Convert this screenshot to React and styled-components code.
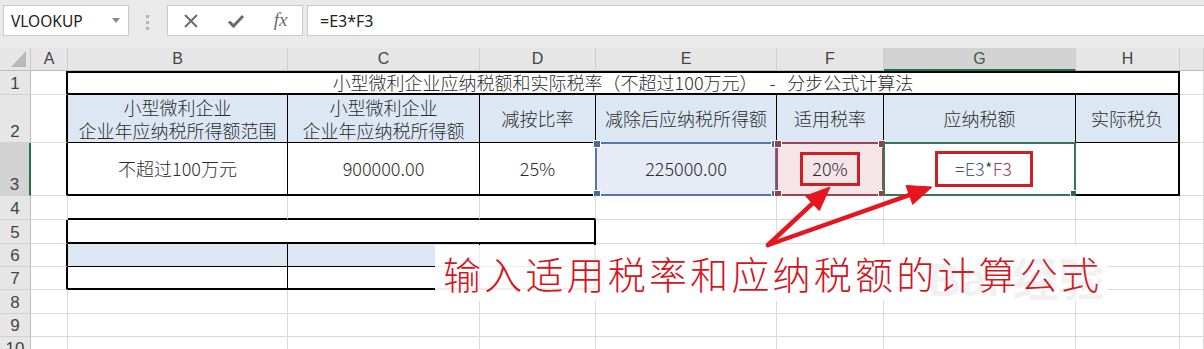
import React from 'react';
import styled, { createGlobalStyle } from 'styled-components';

const GlobalStyle = createGlobalStyle`
  html, body {
    margin: 0;
    padding: 0;
    background: #fff;
  }
  body {
    width: 1204px;
    height: 349px;
    overflow: hidden;
    font-family: "Noto Sans", "Noto Sans CJK SC", sans-serif;
  }
`;

const COLS = [31, 37, 220, 192, 116, 181, 107, 192, 104, 24];
const ROWS = [23, 24, 48, 53, 24, 24, 23, 23, 24, 23, 23];
const LETTERS = ['A', 'B', 'C', 'D', 'E', 'F', 'G', 'H', ''];

const Page = styled.div`
  position: relative;
  width: 1204px;
  height: 349px;
  overflow: hidden;
  background: #fff;
`;

/* ---------- formula bar ---------- */

const FormulaBar = styled.div`
  display: flex;
  align-items: flex-start;
  height: 48px;
  box-sizing: border-box;
  padding: 5px 0 0 3px;
  background: #eaeaea;
`;

const Box = styled.div`
  display: flex;
  align-items: center;
  height: 31px;
  box-sizing: border-box;
  background: #fff;
  border: 1px solid #c9c9c9;
`;

const NameBox = styled(Box)`
  width: 126px;
  justify-content: space-between;
  padding: 0 8px 0 7px;
  font-size: 15.5px;
  color: #222;
`;

const Dots = styled.div`
  display: flex;
  flex-direction: column;
  gap: 3px;
  margin: 10px 18px 0 17px;
  span {
    width: 3px;
    height: 3px;
    background: #b4b4b4;
  }
`;

const FxBox = styled(Box)`
  width: 136px;
  display: grid;
  grid-template-columns: repeat(3, 45px);
  justify-items: center;
`;

const Fx = styled.span`
  font-family: "Liberation Serif", serif;
  font-style: italic;
  font-size: 19px;
  color: #6a6a6a;
  margin-top: -2px;
`;

const FormulaInput = styled(Box)`
  flex: 1;
  margin-left: 4px;
  padding-left: 12px;
  font-size: 16px;
  color: #222;
  border-right: none;
`;

/* ---------- sheet ---------- */

const Sheet = styled.div`
  display: grid;
  grid-template-columns: ${COLS.map((c) => c + 'px').join(' ')};
  grid-template-rows: ${ROWS.map((r) => r + 'px').join(' ')};
`;

const Corner = styled.div`
  display: flex;
  align-items: flex-end;
  justify-content: flex-end;
  padding: 0 4px 3px 0;
  box-sizing: border-box;
  background: #e6e6e6;
  border-right: 1px solid #c6c6c6;
  border-bottom: 1px solid #bdbdbd;
`;

const ColHead = styled.div`
  display: flex;
  align-items: center;
  justify-content: center;
  box-sizing: border-box;
  background: ${(p) => (p.$active ? '#d3d3d3' : '#e6e6e6')};
  border-right: 1px solid #cfcfcf;
  border-bottom: ${(p) => (p.$active ? '2px solid #217346' : '1px solid #bdbdbd')};
  font-family: "Liberation Sans", sans-serif;
  font-size: 16px;
  color: ${(p) => (p.$active ? '#3d5c4a' : '#444')};
`;

const RowHead = styled.div`
  display: flex;
  align-items: flex-end;
  justify-content: center;
  box-sizing: border-box;
  background: ${(p) => (p.$active ? '#d3d3d3' : '#e6e6e6')};
  border-right: ${(p) => (p.$active ? '2px solid #217346' : '1px solid #bdbdbd')};
  border-bottom: 1px solid #d2d2d2;
  font-family: "Liberation Sans", sans-serif;
  font-size: 17px;
  line-height: 20px;
  color: #444;
`;

const Cell = styled.div`
  position: relative;
  grid-column: span ${(p) => p.$span || 1};
  display: flex;
  flex-direction: column;
  align-items: center;
  justify-content: center;
  box-sizing: border-box;
  background: ${(p) => p.$bg || '#fff'};
  border-right: ${(p) => (p.$r ? `${p.$r}px solid #000` : '1px solid #dadada')};
  border-bottom: ${(p) => (p.$b ? `${p.$b}px solid #000` : '1px solid #dadada')};
  box-shadow: ${(p) => (p.$t ? `inset 0 ${p.$t}px 0 #000` : 'none')};
  font-family: "Noto Sans CJK SC", sans-serif;
  font-weight: 300;
  font-size: 18px;
  line-height: 23px;
  color: #2b2b2b;
  white-space: pre;
`;

const Range = styled.div`
  position: absolute;
  inset: -1px -1px -2px -1px;
  border: 2px solid ${(p) => p.$color};
  pointer-events: none;
`;

const Handle = styled.span`
  position: absolute;
  width: 6px;
  height: 6px;
  background: ${(p) => p.$color};
  ${(p) => (p.$y === 't' ? 'top: -4px;' : 'bottom: -4px;')}
  ${(p) => (p.$x === 'l' ? 'left: -4px;' : 'right: -4px;')}
  border: 1px solid #fff;
`;

const RedBox = styled.span`
  display: inline-flex;
  align-items: center;
  justify-content: center;
  width: ${(p) => p.$w}px;
  height: ${(p) => p.$h}px;
  margin-left: ${(p) => p.$shift || 0}px;
  box-sizing: border-box;
  border: 3px solid #cf1f26;
`;

const Ref = styled.span`
  color: ${(p) => p.$color};
`;

/* ---------- annotation ---------- */

const Note = styled.div`
  position: absolute;
  left: 435px;
  top: 245px;
  width: 673px;
  height: 56px;
  padding-left: 8px;
  box-sizing: border-box;
  background: rgba(255, 255, 255, 0.93);
  font-family: "Noto Sans CJK SC", sans-serif;
  font-weight: 300;
  font-size: 38px;
  line-height: 56px;
  letter-spacing: 3.2px;
  color: #d3161d;
  white-space: nowrap;
`;

const Watermark = styled.div`
  position: absolute;
  left: 928px;
  top: 243px;
  font-family: "Liberation Sans", "Noto Sans CJK SC", sans-serif;
  font-size: 46px;
  font-weight: 700;
  color: rgba(150, 150, 150, 0.12);
  white-space: nowrap;
  pointer-events: none;
`;

const Arrows = styled.svg`
  position: absolute;
  left: 0;
  top: 0;
  pointer-events: none;
`;

function Arrow({ from, to }) {
  const dx = to[0] - from[0];
  const dy = to[1] - from[1];
  const len = Math.hypot(dx, dy);
  const ux = dx / len;
  const uy = dy / len;
  const head = 24;
  const half = 10;
  const bx = to[0] - ux * head;
  const by = to[1] - uy * head;
  const pts = [
    [to[0], to[1]],
    [bx - uy * half, by + ux * half],
    [bx + uy * half, by - ux * half],
  ];
  return (
    <g fill="#e5161d" stroke="#e5161d">
      <line x1={from[0]} y1={from[1]} x2={bx + ux * 2} y2={by + uy * 2} strokeWidth="4.5" strokeLinecap="round" />
      <polygon points={pts.map((p) => p.join(',')).join(' ')} strokeWidth="1" />
    </g>
  );
}

const BLUE = '#dce7f3';
const title = '小型微利企业应纳税额和实际税率（不超过100万元）   -   分步公式计算法';

function handles(color) {
  return (
    <>
      <Handle $color={color} $y="t" $x="l" />
      <Handle $color={color} $y="t" $x="r" />
      <Handle $color={color} $y="b" $x="l" />
      <Handle $color={color} $y="b" $x="r" />
    </>
  );
}

const rows = [
  [
    { r: 2 },
    { span: 7, t: 2, r: 2, b: 2, text: title },
    {},
  ],
  [
    { r: 2 },
    { bg: BLUE, r: 1, b: 1, text: ['小型微利企业', '企业年应纳税所得额范围'] },
    { bg: BLUE, r: 1, b: 1, text: ['小型微利企业', '企业年应纳税所得额'] },
    { bg: BLUE, r: 1, b: 1, text: '减按比率' },
    { bg: BLUE, r: 1, b: 1, text: '减除后应纳税所得额' },
    { bg: BLUE, r: 1, b: 1, text: '适用税率' },
    { bg: BLUE, r: 1, b: 1, text: '应纳税额' },
    { bg: BLUE, r: 2, b: 1, text: '实际税负' },
    {},
  ],
  [
    { r: 2 },
    { r: 1, b: 2, text: '不超过100万元' },
    { r: 1, b: 2, text: '900000.00' },
    { r: 1, b: 2, text: '25%' },
    { r: 1, b: 2, bg: '#e6ebf5', text: '225000.00', range: 'e' },
    { r: 1, b: 2, bg: '#f6e5e8', range: 'f', text: 'f3' },
    { r: 1, b: 2, range: 'g', text: 'g3' },
    { r: 2, b: 2 },
    {},
  ],
  [{}, { b: 2 }, { b: 2 }, { b: 2 }, {}, {}, {}, {}, {}],
  [{ r: 2 }, { span: 3, r: 2, b: 2 }, {}, {}, {}, {}, {}],
  [{ r: 2 }, { bg: BLUE, r: 1, b: 1 }, { bg: BLUE, r: 1, b: 1 }, { bg: BLUE, r: 2, b: 1 }, {}, {}, {}, {}, {}],
  [{ r: 2 }, { r: 1, b: 2 }, { r: 1, b: 2 }, { r: 2, b: 2 }, {}, {}, {}, {}, {}],
  [{}, {}, {}, {}, {}, {}, {}, {}, {}],
  [{}, {}, {}, {}, {}, {}, {}, {}, {}],
  [{}, {}, {}, {}, {}, {}, {}, {}, {}],
];

function CellContent({ cell }) {
  if (cell.text === 'f3') {
    return (
      <RedBox $w={60} $h={34}>
        20%
      </RedBox>
    );
  }
  if (cell.text === 'g3') {
    return (
      <RedBox $w={98} $h={36} $shift={8}>
        =<Ref $color="#4b5f8e">E3</Ref>*<Ref $color="#9a4653">F3</Ref>
      </RedBox>
    );
  }
  if (Array.isArray(cell.text)) {
    return cell.text.map((line) => <div key={line}>{line}</div>);
  }
  return cell.text || null;
}

function SheetCell({ cell }) {
  return (
    <Cell $span={cell.span} $bg={cell.bg} $r={cell.r} $b={cell.b} $t={cell.t}>
      <CellContent cell={cell} />
      {cell.range === 'e' && (
        <Range $color="#5677a8">{handles('#4a6a9e')}</Range>
      )}
      {cell.range === 'f' && (
        <Range $color="#9c4655">{handles('#954050')}</Range>
      )}
      {cell.range === 'g' && (
        <Range $color="#3b7553">
          <Handle $color="#2f6a48" $y="b" $x="r" />
        </Range>
      )}
    </Cell>
  );
}

export default function App() {
  return (
    <Page>
      <GlobalStyle />
      <FormulaBar>
        <NameBox>
          VLOOKUP
          <svg width="8" height="5" viewBox="0 0 8 5">
            <path d="M0 0h8L4 5z" fill="#8a8a8a" />
          </svg>
        </NameBox>
        <Dots>
          <span />
          <span />
          <span />
        </Dots>
        <FxBox>
          <svg width="16" height="16" viewBox="0 0 16 16">
            <path d="M2 2l12 12M14 2L2 14" stroke="#6b6b6b" strokeWidth="2" />
          </svg>
          <svg width="18" height="16" viewBox="0 0 18 16">
            <path d="M2 8.5l4.5 4.5L16 3" stroke="#6b6b6b" strokeWidth="3" fill="none" />
          </svg>
          <Fx>fx</Fx>
        </FxBox>
        <FormulaInput>=E3*F3</FormulaInput>
      </FormulaBar>

      <Sheet>
        <Corner>
          <svg width="15" height="16" viewBox="0 0 15 16">
            <path d="M15 0v16H0z" fill="#b9b9b9" />
          </svg>
        </Corner>
        {LETTERS.map((l, i) => (
          <ColHead key={i} $active={l === 'G'}>
            {l}
          </ColHead>
        ))}
        {rows.map((row, ri) => (
          <React.Fragment key={ri}>
            <RowHead $active={ri === 2}>{ri + 1}</RowHead>
            {row.map((cell, ci) => (
              <SheetCell key={ci} cell={cell} />
            ))}
          </React.Fragment>
        ))}
      </Sheet>

      <Note>输入适用税率和应纳税额的计算公式</Note>
      <Watermark>Bai 经验</Watermark>

      <Arrows width="1204" height="349" viewBox="0 0 1204 349">
        <Arrow from={[768, 245]} to={[830, 187]} />
        <Arrow from={[768, 245]} to={[932, 187]} />
      </Arrows>
    </Page>
  );
}
